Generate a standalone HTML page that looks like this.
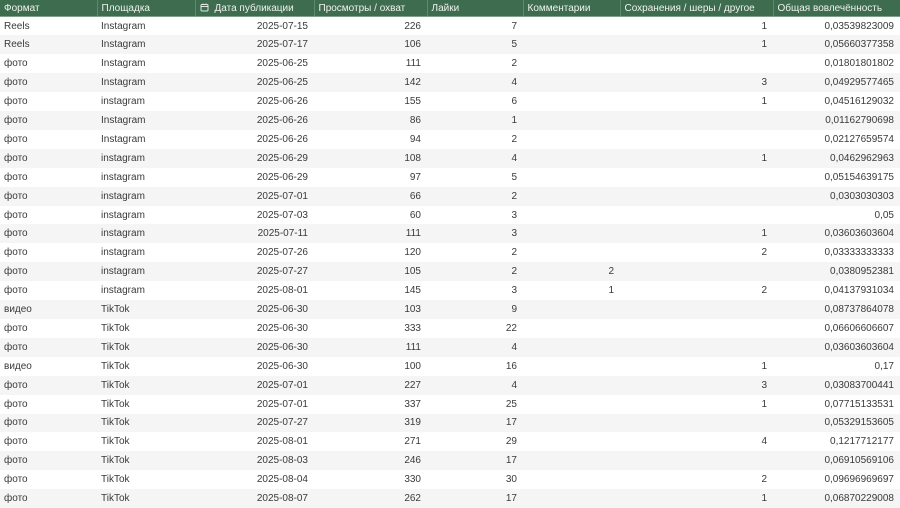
<!DOCTYPE html><html><head><meta charset="utf-8"><style>
body{margin:0;width:900px;height:508px;overflow:hidden;background:#fff;font-family:"Liberation Sans","DejaVu Sans",sans-serif;font-size:10px;color:#3a3a3a}
table{border-collapse:collapse;table-layout:fixed;width:900px}
th{background:#3e6c4f;color:#eef3ee;font-weight:normal;text-align:left;height:16px;padding:0 0 0 4px;border-left:1px solid #5d8a6c;border-bottom:1px solid #7fa08a;white-space:nowrap;overflow:hidden}
th:first-child{border-left:none}
td{height:18.92px;padding:0 6px 0 4px;white-space:nowrap;overflow:hidden;box-sizing:border-box}
tr:nth-child(even) td{background:#f5f5f5}
td.r{text-align:right}
</style></head><body><table>
<colgroup><col style="width:97px"><col style="width:98px"><col style="width:119px"><col style="width:113px"><col style="width:96px"><col style="width:97px"><col style="width:153px"><col style="width:127px"></colgroup>
<thead><tr><th>Формат</th><th>Площадка</th><th><svg width="9" height="9" viewBox="0 0 9 9" style="vertical-align:-1px;margin:0 6px 0 0"><rect x="1" y="1.5" width="7" height="6.5" rx="1" fill="none" stroke="#e0e8e0" stroke-width="1"/><line x1="1" y1="3.5" x2="8" y2="3.5" stroke="#e0e8e0"/><line x1="3" y1="0.5" x2="3" y2="2" stroke="#e0e8e0"/><line x1="6" y1="0.5" x2="6" y2="2" stroke="#e0e8e0"/></svg>Дата публикации</th><th>Просмотры / охват</th><th>Лайки</th><th>Комментарии</th><th>Сохранения / шеры / другое</th><th>Общая вовлечённость</th></tr></thead>
<tbody>
<tr><td>Reels</td><td>Instagram</td><td class="r">2025-07-15</td><td class="r">226</td><td class="r">7</td><td></td><td class="r">1</td><td class="r">0,03539823009</td></tr>
<tr><td>Reels</td><td>Instagram</td><td class="r">2025-07-17</td><td class="r">106</td><td class="r">5</td><td></td><td class="r">1</td><td class="r">0,05660377358</td></tr>
<tr><td>фото</td><td>Instagram</td><td class="r">2025-06-25</td><td class="r">111</td><td class="r">2</td><td></td><td></td><td class="r">0,01801801802</td></tr>
<tr><td>фото</td><td>Instagram</td><td class="r">2025-06-25</td><td class="r">142</td><td class="r">4</td><td></td><td class="r">3</td><td class="r">0,04929577465</td></tr>
<tr><td>фото</td><td>instagram</td><td class="r">2025-06-26</td><td class="r">155</td><td class="r">6</td><td></td><td class="r">1</td><td class="r">0,04516129032</td></tr>
<tr><td>фото</td><td>Instagram</td><td class="r">2025-06-26</td><td class="r">86</td><td class="r">1</td><td></td><td></td><td class="r">0,01162790698</td></tr>
<tr><td>фото</td><td>Instagram</td><td class="r">2025-06-26</td><td class="r">94</td><td class="r">2</td><td></td><td></td><td class="r">0,02127659574</td></tr>
<tr><td>фото</td><td>instagram</td><td class="r">2025-06-29</td><td class="r">108</td><td class="r">4</td><td></td><td class="r">1</td><td class="r">0,0462962963</td></tr>
<tr><td>фото</td><td>instagram</td><td class="r">2025-06-29</td><td class="r">97</td><td class="r">5</td><td></td><td></td><td class="r">0,05154639175</td></tr>
<tr><td>фото</td><td>instagram</td><td class="r">2025-07-01</td><td class="r">66</td><td class="r">2</td><td></td><td></td><td class="r">0,0303030303</td></tr>
<tr><td>фото</td><td>instagram</td><td class="r">2025-07-03</td><td class="r">60</td><td class="r">3</td><td></td><td></td><td class="r">0,05</td></tr>
<tr><td>фото</td><td>instagram</td><td class="r">2025-07-11</td><td class="r">111</td><td class="r">3</td><td></td><td class="r">1</td><td class="r">0,03603603604</td></tr>
<tr><td>фото</td><td>instagram</td><td class="r">2025-07-26</td><td class="r">120</td><td class="r">2</td><td></td><td class="r">2</td><td class="r">0,03333333333</td></tr>
<tr><td>фото</td><td>instagram</td><td class="r">2025-07-27</td><td class="r">105</td><td class="r">2</td><td class="r">2</td><td></td><td class="r">0,0380952381</td></tr>
<tr><td>фото</td><td>instagram</td><td class="r">2025-08-01</td><td class="r">145</td><td class="r">3</td><td class="r">1</td><td class="r">2</td><td class="r">0,04137931034</td></tr>
<tr><td>видео</td><td>TikTok</td><td class="r">2025-06-30</td><td class="r">103</td><td class="r">9</td><td></td><td></td><td class="r">0,08737864078</td></tr>
<tr><td>фото</td><td>TikTok</td><td class="r">2025-06-30</td><td class="r">333</td><td class="r">22</td><td></td><td></td><td class="r">0,06606606607</td></tr>
<tr><td>фото</td><td>TikTok</td><td class="r">2025-06-30</td><td class="r">111</td><td class="r">4</td><td></td><td></td><td class="r">0,03603603604</td></tr>
<tr><td>видео</td><td>TikTok</td><td class="r">2025-06-30</td><td class="r">100</td><td class="r">16</td><td></td><td class="r">1</td><td class="r">0,17</td></tr>
<tr><td>фото</td><td>TikTok</td><td class="r">2025-07-01</td><td class="r">227</td><td class="r">4</td><td></td><td class="r">3</td><td class="r">0,03083700441</td></tr>
<tr><td>фото</td><td>TikTok</td><td class="r">2025-07-01</td><td class="r">337</td><td class="r">25</td><td></td><td class="r">1</td><td class="r">0,07715133531</td></tr>
<tr><td>фото</td><td>TikTok</td><td class="r">2025-07-27</td><td class="r">319</td><td class="r">17</td><td></td><td></td><td class="r">0,05329153605</td></tr>
<tr><td>фото</td><td>TikTok</td><td class="r">2025-08-01</td><td class="r">271</td><td class="r">29</td><td></td><td class="r">4</td><td class="r">0,1217712177</td></tr>
<tr><td>фото</td><td>TikTok</td><td class="r">2025-08-03</td><td class="r">246</td><td class="r">17</td><td></td><td></td><td class="r">0,06910569106</td></tr>
<tr><td>фото</td><td>TikTok</td><td class="r">2025-08-04</td><td class="r">330</td><td class="r">30</td><td></td><td class="r">2</td><td class="r">0,09696969697</td></tr>
<tr><td>фото</td><td>TikTok</td><td class="r">2025-08-07</td><td class="r">262</td><td class="r">17</td><td></td><td class="r">1</td><td class="r">0,06870229008</td></tr>
</tbody></table></body></html>
